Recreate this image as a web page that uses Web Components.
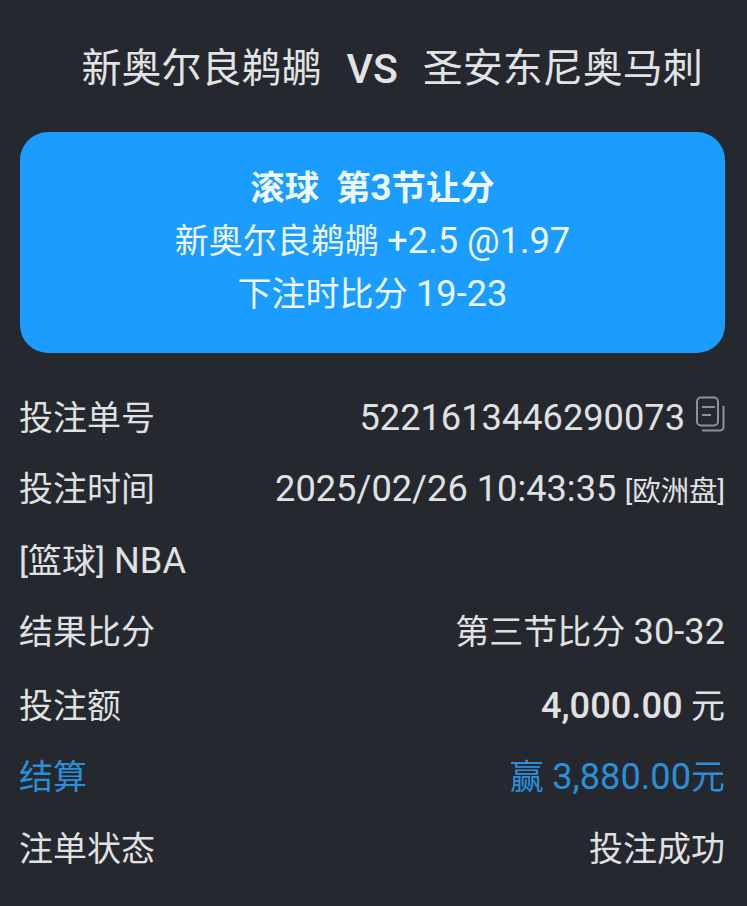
<!DOCTYPE html>
<html lang="zh-CN">
<head>
<meta charset="utf-8">
<title>注单详情</title>
<style>
    html, body {
        margin: 0;
        background: #262830;
    }
    body {
        width: 747px;
        height: 906px;
        overflow: hidden;
        color: #e6e7e7;
        font-family: Roboto, "Noto Sans CJK SC", sans-serif;
    }
</style>
</head>
<body>
<bet-detail>
    <match-title home="新奥尔良鹈鹕" away="圣安东尼奥马刺"></match-title>
    <bet-card>
        <b slot="head" style="font-size:34.4px">滚球&nbsp; 第<bet-num>3</bet-num>节让分</b>
        <span>新奥尔良鹈鹕 <bet-num>+2.5 @1.97</bet-num></span>
        <span>下注时比分 <bet-num>19-23</bet-num></span>
    </bet-card>
    <bet-row label="投注单号" nudge><bet-num>5221613446290073</bet-num><copy-icon></copy-icon></bet-row>
    <bet-row label="投注时间" nudge><bet-num>2025/02/26 10:43:35</bet-num> <small style="font-size:28.4px">[欧洲盘]</small></bet-row>
    <bet-row label="[篮球]" tail="NBA"></bet-row>
    <bet-row label="结果比分">第三节比分 <bet-num>30-32</bet-num></bet-row>
    <bet-row label="投注额" style="margin-top:2px"><b style="font-weight:500"><bet-num>4,000.00</bet-num></b> 元</bet-row>
    <bet-row label="结算" accent>赢 <bet-num>3,880.00</bet-num>元</bet-row>
    <bet-row label="注单状态">投注成功</bet-row>
</bet-detail>

<script>
class BetDetail extends HTMLElement {
    constructor() {
        super();
        this.attachShadow({ mode: "open" });
        this.shadowRoot.innerHTML = `
        <style>
            :host { display: block; padding: 0 22px 0 20px; }
            .rows { display: flex; flex-direction: column; }
        </style>
        <div class="rows"><slot></slot></div>`;
    }
}

// latin och siffror är lite större än de kinesiska tecknen i bilden
// inga mellanslag i shadow root, annars blir det en extra space i texten
class BetNum extends HTMLElement {
    constructor() {
        super();
        this.attachShadow({ mode: "open" });
        this.shadowRoot.innerHTML = `<style>:host { display: inline; font-size: 1.065em; }</style><slot></slot>`;
    }
}

class MatchTitle extends HTMLElement {
    constructor() {
        super();
        this.attachShadow({ mode: "open" });
        this.shadowRoot.innerHTML = `
        <style>
            :host {
                display: flex;
                height: 132px;
                padding: 6px 0 0 61.5px;
                box-sizing: border-box;
                gap: 25px;
                align-items: center;
                font-size: 40px;
                color: #e2e3e4;
                line-height: 1;
            }
            b { font-weight: 500; font-size: 41px; }
            span { white-space: nowrap; }
        </style>
        <span id="home"></span><b>VS</b><span id="away"></span>`;
        this.shadowRoot.querySelector("#home").textContent = this.getAttribute("home");
        this.shadowRoot.querySelector("#away").textContent = this.getAttribute("away");
    }
}

class BetCard extends HTMLElement {
    constructor() {
        super();
        this.attachShadow({ mode: "open" });
        this.shadowRoot.innerHTML = `
        <style>
            :host {
                display: flex;
                flex-direction: column;
                align-items: center;
                justify-content: center;
                height: 221px;
                box-sizing: border-box;
                padding-bottom: 5px;
                margin-bottom: 26.5px;
                background: #1a9dfe;
                border-radius: 28px;
                color: #eef8ff;
                font-size: 34px;
                line-height: 53px;
            }
            ::slotted(*) { display: block; white-space: nowrap; height: 53px; }
        </style>
        <slot name="head"></slot>
        <slot></slot>`;
    }
}

class BetRow extends HTMLElement {
    constructor() {
        super();
        this.attachShadow({ mode: "open" });
        this.shadowRoot.innerHTML = `
        <style>
            :host {
                display: flex;
                justify-content: space-between;
                align-items: center;
                height: 71.5px;
                font-size: 34px;
                white-space: nowrap;
                color: #e0e1e2;
            }
            :host([accent]) { color: #2b8fd8; }
            :host([nudge]) .value { padding-top: 4px; }
            .label { margin-left: -1px; }
            .tail { font-size: 1.065em; }
        </style>
        <span class="label"><span id="text"></span><span class="tail"></span></span>
        <span class="value"><slot></slot></span>`;
        this.shadowRoot.querySelector("#text").textContent = this.getAttribute("label");
        if (this.hasAttribute("tail")) {
            this.shadowRoot.querySelector(".tail").textContent = " " + this.getAttribute("tail");
        }
    }
}

class CopyIcon extends HTMLElement {
    constructor() {
        super();
        this.attachShadow({ mode: "open" });
        this.shadowRoot.innerHTML = `<style>
            :host { display: inline-block; margin-left: 10px; vertical-align: -2px; line-height: 0; }
        </style><svg width="30" height="36" viewBox="0 0 30 36" fill="none" stroke="#8f9197" stroke-width="2">
            <rect x="2" y="1.5" width="21" height="28" rx="4"/>
            <path d="M7 11h13M7 19h9"/>
            <path d="M28.5 10v21a3.5 3.5 0 0 1-3.5 3.5H7"/>
        </svg>`;
    }
}

customElements.define("bet-detail", BetDetail);
customElements.define("bet-num", BetNum);
customElements.define("match-title", MatchTitle);
customElements.define("bet-card", BetCard);
customElements.define("bet-row", BetRow);
customElements.define("copy-icon", CopyIcon);
</script>
</body>
</html>
